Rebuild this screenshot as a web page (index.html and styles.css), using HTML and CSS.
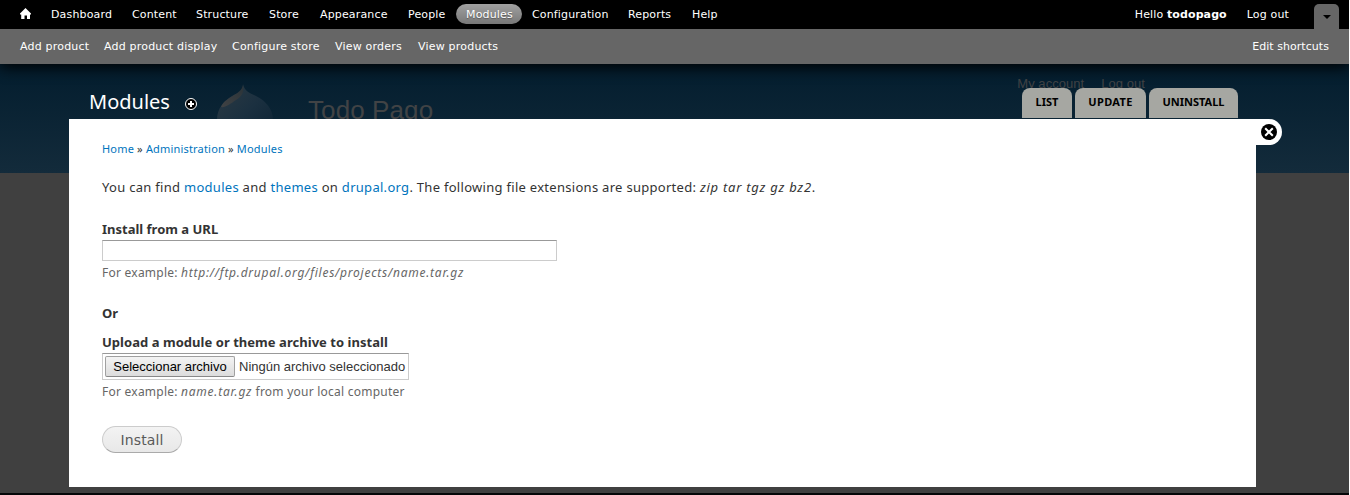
FILE: index.html
```html
<!DOCTYPE html>
<html lang="en">
<head>
<meta charset="utf-8">
<title>Modules | Todo Pago</title>
<link rel="stylesheet" href="styles.css">
</head>
<body>
<div class="page">
  <nav class="toolbar">
    <a class="home" aria-label="Home"><svg width="11" height="11" viewBox="0 0 11 11"><path fill="#fff" d="M5.5 0 L11 5.5 V6.5 H10 V11 H7 V7.5 H4.5 V11 H1.2 V6.5 H0 V5.5 Z"/></svg></a>
    <a class="w81">Dashboard</a>
    <a class="w64">Content</a>
    <a class="w73">Structure</a>
    <a class="w51">Store</a>
    <a class="w88">Appearance</a>
    <a class="w58">People</a>
    <a class="w66 active">Modules</a>
    <a class="w96">Configuration</a>
    <a class="w64">Reports</a>
    <a>Help</a>
    <div class="user">
      <a>Hello <b>todopago</b></a>
      <a>Log out</a>
      <span class="toggle"></span>
    </div>
  </nav>
  <nav class="shortcuts">
    <a class="s84">Add product</a>
    <a class="s128">Add product display</a>
    <a class="s103">Configure store</a>
    <a class="s83">View orders</a>
    <a>View products</a>
    <a class="edit">Edit shortcuts</a>
  </nav>
  <header class="site">
    <svg class="drop" width="60" height="60" viewBox="0 0 60 60">
      <defs>
        <linearGradient id="body" x1="0" y1="0" x2="1" y2="1"><stop offset="0" stop-color="#2c3a43"/><stop offset=".5" stop-color="#1b3040"/><stop offset="1" stop-color="#0b2233"/></linearGradient>
        <linearGradient id="shine" x1="1" y1="0" x2="0" y2="1"><stop offset="0" stop-color="#2a3338"/><stop offset="1" stop-color="#404244"/></linearGradient>
      </defs>
      <path fill="url(#body)" d="M26 0 C27 6 32 9 39 12 C49 17 56 25 56 36 C56 50 44 60 28 60 C12 60 0 50 0 36 C0 24 7 17 15 12 C22 9 26 6 26 0Z"/>
      <path fill="url(#shine)" d="M26 1 C27 7 26 12 19 16 C13 20 8 24 4 23 C6 17 13 14 17 11 C22 8 25 6 26 1Z"/>
    </svg>
    <span class="site-name">Todo Pago</span>
    <div class="account"><span>My account</span><span>Log out</span></div>
  </header>
  <main class="overlay">
    <div class="titlebar">
      <h1>Modules</h1>
      <svg class="plus" width="14" height="14" viewBox="0 0 14 14"><circle cx="7" cy="7" r="5.5" fill="#000" stroke="#fff"/><path d="M7 4v6M4 7h6" stroke="#fff" stroke-width="2"/></svg>
      <div class="tabs"><a class="t1">LIST</a><a class="t2">UPDATE</a><a class="t3">UNINSTALL</a></div>
    </div>
    <div class="panel">
      <div class="close"><svg width="16" height="16" viewBox="0 0 16 16"><circle cx="8" cy="8" r="8"/><path d="M4.2 4.2l7.6 7.6M11.8 4.2l-7.6 7.6" stroke="#fff" stroke-width="2"/></svg></div>
      <div class="crumbs"><a>Home</a> » <a>Administration</a> » <a>Modules</a></div>
      <p class="intro">You can find <a>modules</a> and <a>themes</a> on <a>drupal.org</a>. The following file extensions are supported: <i>zip tar tgz gz bz2</i>.</p>
      <label class="label">Install from a URL</label>
      <input class="url" type="text">
      <div class="desc">For example: <i>http://ftp.drupal.org/files/projects/name.tar.gz</i></div>
      <div class="label or">Or</div>
      <label class="label">Upload a module or theme archive to install</label>
      <div class="file"><button class="choose">Seleccionar archivo</button><span>Ningún archivo seleccionado</span></div>
      <div class="desc">For example: <i>name.tar.gz</i> from your local computer</div>
      <button class="install">Install</button>
    </div>
  </main>
</div>
</body>
</html>
```
FILE: styles.css
```css
* { box-sizing: border-box; }
body { margin: 0; background: #fff; font-family: "Noto Sans", sans-serif; }
.page { position: relative; width: 1349px; height: 495px; overflow: hidden; background: #404040; border-bottom: 2px solid #050708; }

.toolbar, .shortcuts { position: relative; display: flex; color: #fff; font: 11px/20px "DejaVu Sans", sans-serif; letter-spacing: .15px; white-space: nowrap; }
.toolbar { z-index: 2; height: 29px; padding: 4px 10px 0; background: #000; }
.toolbar a { height: 20px; padding: 1px 10px 0; line-height: 19.5px; }
.toolbar .home { width: 31px; padding-top: 4px; line-height: 0; }
.active { border-radius: 10px; background: linear-gradient(#a0a0a0, #787878); text-shadow: 0 1px 1px #555; }
.w81 { width: 81px; } .w64 { width: 64px; } .w73 { width: 73px; } .w51 { width: 51px; } .w88 { width: 88px; }
.w58 { width: 58px; } .w66 { width: 66px; } .w96 { width: 96px; }
.user { display: flex; margin-left: auto; }
.user b { letter-spacing: .1px; }
.toggle { display: flex; justify-content: center; width: 25px; height: 25px; margin-left: 15px; border-radius: 5px 5px 0 0; background: #666; }
.toggle::before { content: ""; height: 0; margin-top: 11px; border: 4px solid transparent; border-top-color: #000; border-bottom: 0; }
.shortcuts { z-index: 1; height: 35px; padding: 8px 20px 0; background: #666; box-shadow: 0 3px 15px #000; letter-spacing: .2px; }
.s84 { width: 84px; } .s128 { width: 128px; } .s103 { width: 103px; } .s83 { width: 83px; }
.edit { margin-left: auto; letter-spacing: .05px; }

.site { display: flex; height: 109px; padding-left: 217px; background: linear-gradient(#031d2e, #132b3b); color: #414345; font-family: "Liberation Sans", sans-serif; }
.drop { margin-top: 20px; flex: none; }
.site-name { margin: 31px 0 0 31px; font-size: 26px; line-height: 30px; letter-spacing: .1px; }
.account { display: flex; gap: 17px; margin: 12px 204px 0 auto; font-size: 13px; line-height: 15px; letter-spacing: .05px; }

.overlay { position: absolute; z-index: 3; top: 88px; left: 69px; width: 1187px; }
.titlebar { display: flex; height: 31px; padding: 0 18px 0 20px; }
h1 { width: 95px; margin: 0; color: #fff; font-size: 20px; font-weight: 400; line-height: 28px; }
.plus { margin-top: 9px; }
.tabs { display: flex; gap: 3px; margin-left: auto; font-size: 11px; font-weight: 700; line-height: 28px; text-align: center; }
.tabs a { height: 30px; border-radius: 8px 8px 0 0; background: #a6a7a2; color: #000; }
.t1 { width: 50px; } .t2 { width: 71px; letter-spacing: .35px; } .t3 { width: 89px; }
.panel { position: relative; height: 368px; padding: 22px 33px; background: #fff; color: #333; }
.panel a { color: #0074bd; }
.close { position: absolute; top: 0; left: 100%; width: 26px; height: 26px; padding: 5px; border-radius: 0 13px 13px 0; background: #fff; line-height: 0; }
.crumbs { font-size: 11px; line-height: 16px; letter-spacing: .18px; }
.intro { margin: 20px 0 0; font-size: 13px; line-height: 20px; letter-spacing: .29px; }
.intro i { letter-spacing: .75px; }
.label { display: block; margin-top: 22px; font-size: 13px; font-weight: 700; line-height: 20px; }
.url { display: block; width: 455px; height: 21px; margin-top: 1px; border: 1px solid #ccc; border-top-color: #999; }
.desc { margin-top: 4px; color: #666; font-size: 12px; line-height: 16px; letter-spacing: .24px; }
.desc i { letter-spacing: .75px; }
.or { margin-top: 22px; }
.or + .label { margin-top: 9px; letter-spacing: .04px; }
.file { display: flex; align-items: center; width: 307px; height: 27px; margin-top: 1px; padding: 0 2px; border: 1px solid #ccc; border-top-color: #999; font: 13px "Liberation Sans", sans-serif; white-space: nowrap; }
.choose { flex: none; width: 130px; height: 21px; margin-right: 4px; padding: 0; border: 1px solid #a0a0a0; border-bottom-color: #888; border-radius: 2px; background: linear-gradient(#f4f4f4, #dcdcdc); color: #000; font: inherit; }
.install { display: block; width: 80px; height: 27px; margin-top: 26px; padding: 0; border: 1px solid #ccc; border-bottom-color: #aaa; border-radius: 14px; background: linear-gradient(#f3f3f3, #e8e8e8); color: #5a5a5a; font: 14px "DejaVu Sans", sans-serif; letter-spacing: .1px; }
```
